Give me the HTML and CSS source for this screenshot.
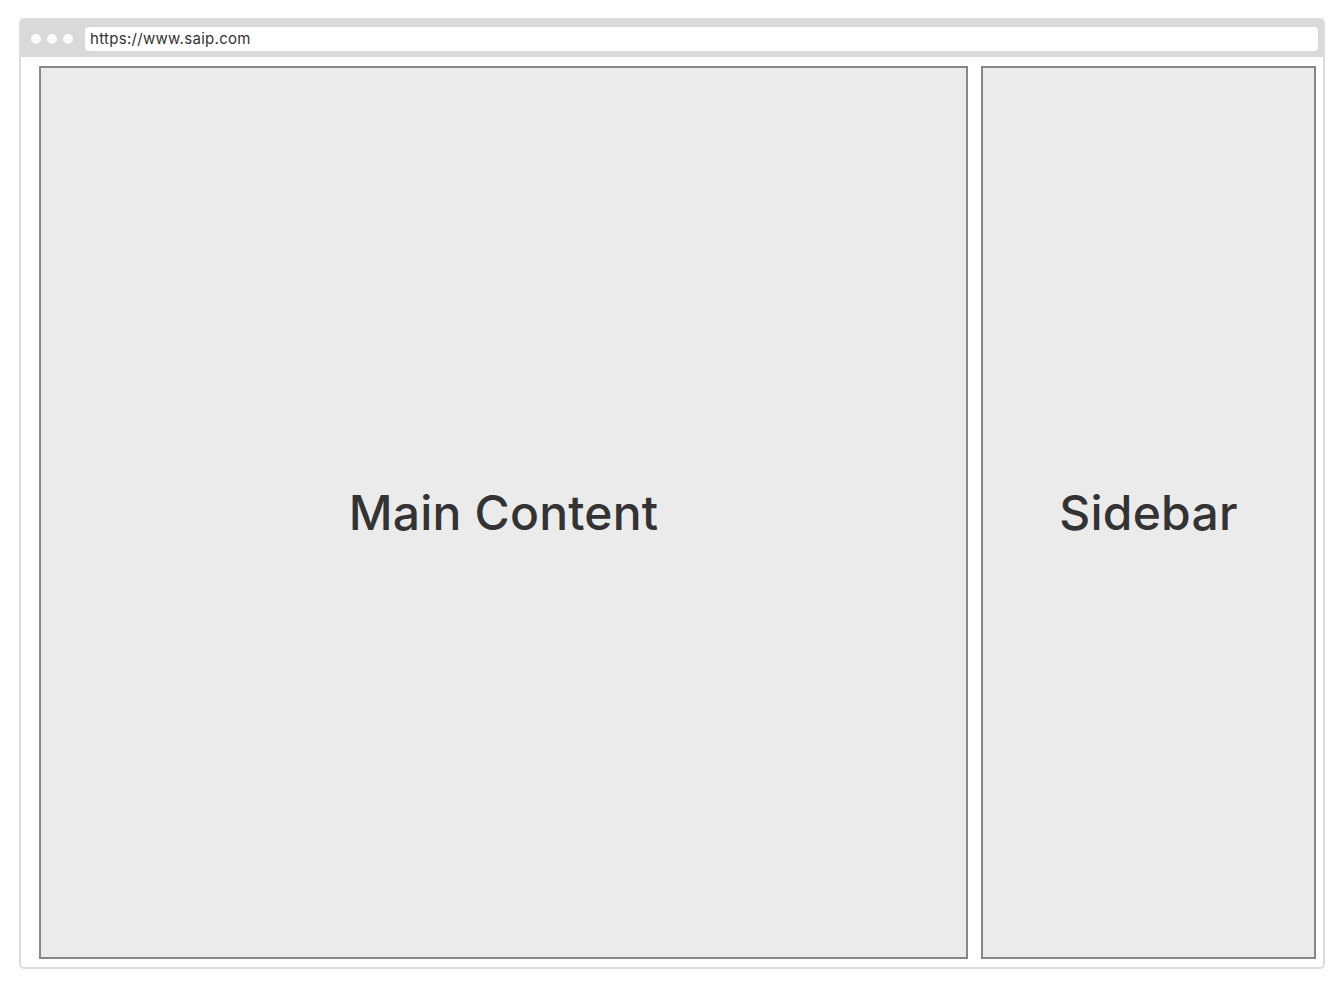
FILE: index.html
```html
<!DOCTYPE html>
<html lang="en">
<head>
  <meta charset="UTF-8" />
  <title>Layout wireframe</title>
  <link rel="stylesheet" href="styles.css">
</head>
<body>
  <div class="browser">
    <div class="toolbar">
      <div class="dots">
        <span></span><span></span><span></span>
      </div>
      <div class="address">https://www.saip.com</div>
    </div>
    <div class="page">
      <main class="box main-box">Main Content</main>
      <aside class="box side-box">Sidebar</aside>
    </div>
  </div>
</body>
</html>
```

FILE: styles.css
```css
* {
  box-sizing: border-box;
}

body {
  margin: 0;
  background: #ffffff;
  font-family: Inter, "Noto Sans", "Liberation Sans", sans-serif;
  color: #333;
}

.browser {
  margin: 18px 0 0 19px;
  width: 1306px;
  height: 951px;
  border: 2px solid #dcdcdc;
  border-radius: 5px;
  display: flex;
  flex-direction: column;
  background: #fff;
}

.toolbar {
  height: 37px;
  background: #d9d9d9;
  display: flex;
  align-items: center;
  padding: 0 5px 0 10px;
  gap: 12px;
}

.dots {
  display: flex;
  gap: 6px;
}

.dots span {
  width: 10px;
  height: 10px;
  border-radius: 50%;
  background: #fafafa;
}

.address {
  flex: 1;
  height: 24px;
  background: #fff;
  border-radius: 4px;
  font-size: 15px;
  letter-spacing: 0.3px;
  line-height: 24px;
  padding-left: 5px;
  color: #333;
}

.page {
  flex: 1;
  display: flex;
  gap: 13px;
  padding: 9px 7px 8px 18px;
}

.box {
  background: #ebebeb;
  border: 2px solid #878787;
  display: flex;
  align-items: center;
  justify-content: center;
  font-size: 48px;
  font-weight: 500;
  letter-spacing: 0.2px;
  color: #333;
}

.main-box {
  width: 929px;
}

.side-box {
  flex: 1;
}
```
